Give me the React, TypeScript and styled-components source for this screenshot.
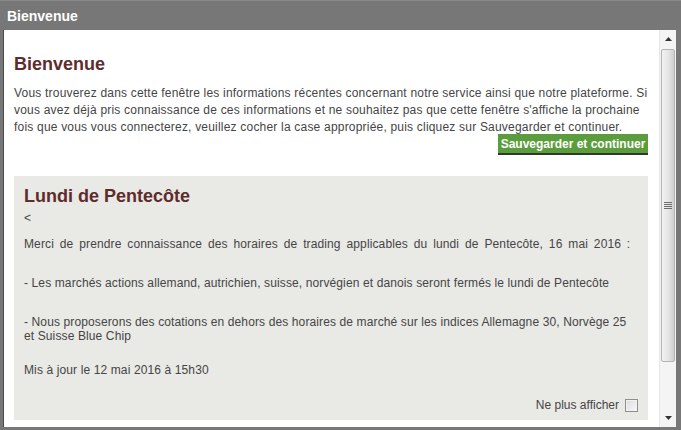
import * as React from 'react';
import styled, { createGlobalStyle } from 'styled-components';

const GlobalStyle = createGlobalStyle`
    html, body {
        margin: 0;
        padding: 0;
        background: #777777;
    }
    body {
        font-family: "Liberation Sans", Arial, sans-serif;
    }
`;

const Window = styled.div`
    width: 681px;
    height: 430px;
    box-sizing: border-box;
    background: #777777;
    border-top: 1px solid #8a8a8a;
    display: flex;
    flex-direction: column;
    overflow: hidden;
`;

const TitleBar = styled.div`
    height: 29px;
    flex: none;
    display: flex;
    align-items: center;
    padding-left: 7px;
    color: #ffffff;
    font-size: 14px;
    font-weight: bold;
`;

const Frame = styled.div`
    flex: 1;
    display: flex;
    margin: 0 5px 3px 3px;
    border-left: 1px solid #4a4a4a;
    background: #ffffff;
    min-height: 0;
`;

const Content = styled.div`
    flex: 1;
    padding: 24px 11px 9px 10px;
    color: #454545;
    font-size: 12px;
`;

const Heading = styled.h2`
    margin: 0;
    font-size: 18px;
    line-height: 21px;
    font-weight: bold;
    color: #5e2c2c;
`;

const Intro = styled.p`
    margin: 10px 0 0;
    line-height: 17px;
    letter-spacing: 0.2px;
    white-space: nowrap;
`;

const ButtonRow = styled.div`
    display: flex;
    justify-content: flex-end;
    margin-top: -2px;
`;

const SaveButton = styled.button`
    height: 21px;
    width: 150px;
    padding: 0;
    border: none;
    border-bottom: 2px solid #2f3a2a;
    background: #5b9d3d;
    color: #ffffff;
    font-family: inherit;
    font-size: 12px;
    font-weight: bold;
    cursor: pointer;
`;

const NewsPanel = styled.div`
    margin-top: 21px;
    background: #e9e9e5;
    padding: 10px 10px 8px 10px;
    height: 244px;
    box-sizing: border-box;
    display: flex;
    flex-direction: column;
`;

const Line = styled.p<{ gap: number; spread?: number }>`
    margin: ${props => props.gap}px 0 0;
    line-height: 14px;
    letter-spacing: 0.12px;
    word-spacing: ${props => props.spread ?? 0}px;
`;

const Footer = styled.label`
    margin-top: auto;
    display: flex;
    justify-content: flex-end;
    align-items: center;
    gap: 6px;
    line-height: 14px;
`;

const CheckBox = styled.span`
    width: 11px;
    height: 11px;
    border: 1px solid #8f8f8f;
    background: linear-gradient(135deg, #dcdcdc, #f8f8f8);
    box-shadow: inset 0 0 0 1px #f2f2f2;
`;

const ScrollBar = styled.div`
    width: 16px;
    flex: none;
    display: flex;
    flex-direction: column;
    background: #f4f4f4;
    border-left: 1px solid #e6e6e6;
`;

const Arrow = styled.div`
    height: 18px;
    flex: none;
    display: flex;
    align-items: center;
    justify-content: center;
`;

const Track = styled.div`
    flex: 1;
    padding: 1px 1px 0 1px;
    display: flex;
    flex-direction: column;
`;

const Thumb = styled.div`
    height: 313px;
    box-sizing: border-box;
    border: 1px solid #b4b4b4;
    border-radius: 2px;
    background: linear-gradient(90deg, #f2f2f2 0%, #e6e6e6 50%, #cfcfcf 100%);
    display: flex;
    align-items: center;
    justify-content: center;
`;

const Grip = () => (
    <svg width="8" height="8" viewBox="0 0 8 8">
        {[0, 2, 4, 6].map(y => (
            <rect key={y} x="0" y={y} width="8" height="1" fill="#6e6e6e" />
        ))}
    </svg>
);

const UpArrow = () => (
    <svg width="7" height="4" viewBox="0 0 7 4">
        <polygon points="3.5,0 7,4 0,4" fill="#333333" />
    </svg>
);

const DownArrow = () => (
    <svg width="7" height="4" viewBox="0 0 7 4">
        <polygon points="0,0 7,0 3.5,4" fill="#333333" />
    </svg>
);

export default function App() {
    return (
        <>
            <GlobalStyle />
            <Window>
                <TitleBar>Bienvenue</TitleBar>
                <Frame>
                    <Content>
                        <Heading>Bienvenue</Heading>
                        <Intro>
                            Vous trouverez dans cette fenêtre les informations récentes concernant notre service ainsi que notre plateforme. Si<br />
                            vous avez déjà pris connaissance de ces informations et ne souhaitez pas que cette fenêtre s'affiche la prochaine<br />
                            fois que vous vous connecterez, veuillez cocher la case appropriée, puis cliquez sur Sauvegarder et continuer.
                        </Intro>
                        <ButtonRow>
                            <SaveButton>Sauvegarder et continuer</SaveButton>
                        </ButtonRow>
                        <NewsPanel>
                            <Heading>Lundi de Pentecôte</Heading>
                            <Line gap={4}>&lt;</Line>
                            <Line gap={12} spread={2.4}>Merci de prendre connaissance des horaires de trading applicables du lundi de Pentecôte, 16 mai 2016 :</Line>
                            <Line gap={25}>- Les marchés actions allemand, autrichien, suisse, norvégien et danois seront fermés le lundi de Pentecôte</Line>
                            <Line gap={25}>
                                - Nous proposerons des cotations en dehors des horaires de marché sur les indices Allemagne 30, Norvège 25<br />
                                et Suisse Blue Chip
                            </Line>
                            <Line gap={20}>Mis à jour le 12 mai 2016 à 15h30</Line>
                            <Footer>
                                Ne plus afficher
                                <CheckBox />
                            </Footer>
                        </NewsPanel>
                    </Content>
                    <ScrollBar>
                        <Arrow><UpArrow /></Arrow>
                        <Track>
                            <Thumb><Grip /></Thumb>
                        </Track>
                        <Arrow><DownArrow /></Arrow>
                    </ScrollBar>
                </Frame>
            </Window>
        </>
    );
}
